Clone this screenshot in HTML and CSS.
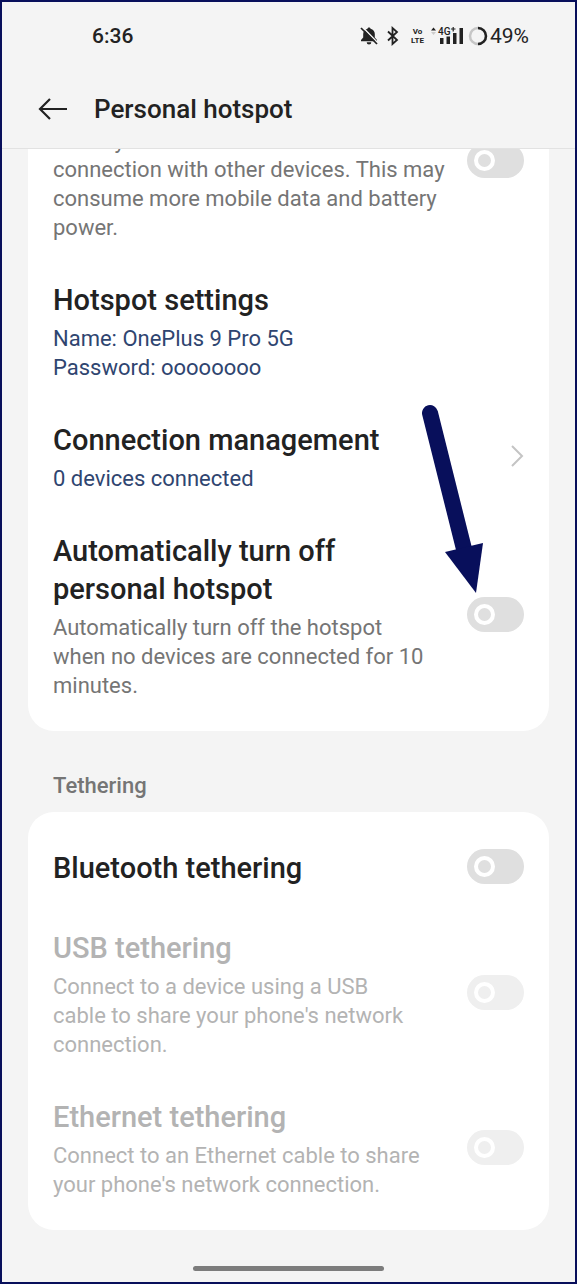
FILE: index.html
```
<!DOCTYPE html>
<html lang="en">
<head>
    <meta charset="UTF-8">
    <meta name="viewport" content="width=device-width, initial-scale=1.0">
    <title>Personal hotspot</title>
    <link rel="stylesheet" href="styles.css">
</head>
<body>
    <div class="screen">
        <header class="top">
            <div class="status-bar">
                <span class="time">6:36</span>
                <div class="status-icons">
                    <!-- Muted bell -->
                    <svg width="20" height="20" viewBox="0 0 20 20">
                        <path d="M10 1.500c-1 0-1.500.6-1.500 1.300C5.700 3.500 4.200 5.500 4.200 8v3.500L2 14v1.200h16V14l-2.200-2.500V8c0-2.500-1.500-4.500-4.300-5.200 0-.7-.5-1.300-1.500-1.300zM7.700 16.200a2.300 2.300 0 0 0 4.600 0z" fill="#222"/>
                        <path d="M3.500 1l15.500 16" stroke="#f4f4f4" stroke-width="1.500"/>
                        <path d="M2 2l16 16" stroke="#222" stroke-width="1.700"/>
                    </svg>
                    <!-- Bluetooth -->
                    <svg class="bluetooth" width="14" height="20" viewBox="0 0 14 20">
                        <path d="M2 5.500l9 8.500-4.500 4V2L11 6l-9 8.500" fill="none" stroke="#222" stroke-width="1.800"/>
                    </svg>
                    <span class="volte">Vo<br>LTE</span>
                    <!-- Mobile signal -->
                    <svg class="signal" width="32" height="20" viewBox="0 0 32 20">
                        <path d="M0 4.500L2.500 1.500 5 4.500z" fill="#222"/>
                        <path d="M0 6h5L2.500 9z" fill="#ccc"/>
                        <path d="M9 12h3.500v6H9zM15.500 10.500H19V18h-3.500zM22 7h3.500v11H22zM28.500 2H32v16h-3.500z" fill="#222"/>
                        <text class="signal-text" x="7" y="9">4G</text>
                        <path d="M20 3h4.500M22.200 1v4.500" stroke="#222" stroke-width="1.200"/>
                    </svg>
                    <!-- Battery ring -->
                    <svg width="20" height="20" viewBox="0 0 20 20">
                        <circle cx="10" cy="10" r="8" fill="none" stroke="#c6c6c6" stroke-width="2.500"/>
                        <path d="M10 2a8 8 0 0 1 0 16" fill="none" stroke="#222" stroke-width="2.500"/>
                    </svg>
                    <span class="battery">49%</span>
                </div>
            </div>
            <div class="app-bar">
                <button class="back" type="button" aria-label="Back">
                    <svg width="30" height="24" viewBox="0 0 30 24">
                        <path d="M29 12H2M12 2L2 12l10 10" fill="none" stroke="#222" stroke-width="2.200"/>
                    </svg>
                </button>
                <h1>Personal hotspot</h1>
            </div>
        </header>

        <main>
            <section class="card">
                <div class="row scrolled">
                    <label class="desc" for="hotspot">Share your mobile network<br>connection with other devices. This may<br>consume more mobile data and battery<br>power.</label>
                    <input class="toggle" type="checkbox" id="hotspot">
                </div>

                <a class="row" href="#">
                    <div class="row-text">
                        <h2 class="title">Hotspot settings</h2>
                        <p class="desc value">Name: OnePlus 9 Pro 5G<br>Password: oooooooo</p>
                    </div>
                </a>

                <a class="row" href="#">
                    <div class="row-text">
                        <h2 class="title">Connection management</h2>
                        <p class="desc value">0 devices connected</p>
                    </div>
                    <svg class="chevron" width="14" height="24" viewBox="0 0 14 24">
                        <path d="M2 2l10 10L2 22" fill="none" stroke="#c4c4c4" stroke-width="2"/>
                    </svg>
                </a>

                <div class="row">
                    <div class="row-text">
                        <label class="title" for="autoOff">Automatically turn off<br>personal hotspot</label>
                        <p class="desc">Automatically turn off the hotspot<br>when no devices are connected for 10<br>minutes.</p>
                    </div>
                    <input class="toggle" type="checkbox" id="autoOff">
                    <!-- Arrow pointing at the toggle -->
                    <svg class="pointer" width="64" height="192" viewBox="0 0 64 192">
                        <path d="M10 10L45 150" stroke="#080f5b" stroke-width="16" stroke-linecap="round"/>
                        <path d="M25 149l38-9-7 50z" fill="#080f5b"/>
                    </svg>
                </div>
            </section>

            <h3 class="group-title">Tethering</h3>

            <section class="card">
                <div class="row single">
                    <label class="title" for="bluetooth">Bluetooth tethering</label>
                    <input class="toggle" type="checkbox" id="bluetooth">
                </div>

                <div class="row disabled">
                    <div class="row-text">
                        <label class="title" for="usb">USB tethering</label>
                        <p class="desc">Connect to a device using a USB<br>cable to share your phone's network<br>connection.</p>
                    </div>
                    <input class="toggle" type="checkbox" id="usb" disabled>
                </div>

                <div class="row disabled">
                    <div class="row-text">
                        <label class="title" for="ethernet">Ethernet tethering</label>
                        <p class="desc">Connect to an Ethernet cable to share<br>your phone's network connection.</p>
                    </div>
                    <input class="toggle" type="checkbox" id="ethernet" disabled>
                </div>
            </section>
        </main>

        <div class="home-bar"></div>
    </div>
</body>
</html>
```
FILE: styles.css
```
*, *::before {
    box-sizing: border-box;
}
body {
    margin: 0;
    font-family: Roboto, "Liberation Sans", sans-serif;
    color: #222;
    background-color: #f4f4f4;
}
h1, h2, h3, p {
    margin: 0;
}
svg {
    display: block;
    flex: none;
}
.screen {
    display: flex;
    flex-direction: column;
    min-height: 100vh;
    border: 2px solid #080f5b;
}

/* Header */
.top {
    position: sticky;
    top: 0;
    z-index: 1;
    background-color: #f4f4f4;
    border-bottom: 1px solid #e2e2e2;
}
.status-bar {
    display: flex;
    align-items: center;
    justify-content: space-between;
    height: 68px;
    padding: 0 46px 0 90px;
}
.time {
    font-size: 21px;
    font-weight: 500;
}
.status-icons {
    display: flex;
    align-items: center;
}
.bluetooth {
    margin-left: 7px;
}
.volte {
    margin-left: 11px;
    font-size: 8px;
    font-weight: 700;
    line-height: 9px;
    text-align: center;
}
.signal {
    margin: 0 5px 0 7px;
}
.signal-text {
    font-size: 10px;
    font-weight: 500;
    fill: #222;
}
.battery {
    margin-left: 2px;
    font-size: 21px;
}
.app-bar {
    display: flex;
    align-items: center;
    gap: 26px;
    height: 78px;
    padding: 0 36px;
}
.back {
    padding: 0;
    border: none;
    background: none;
    cursor: pointer;
}
.app-bar h1 {
    font-size: 26px;
    font-weight: 500;
}

/* Cards, the first one is scrolled under the header */
main {
    flex: 1;
    margin-top: -60px;
    padding: 0 26px;
}
.card {
    padding: 17px 25px 12px;
    background-color: #fff;
    border-radius: 26px;
}
.row {
    position: relative;
    display: flex;
    align-items: center;
    justify-content: space-between;
    padding: 20px 0 19px;
    color: inherit;
    text-decoration: none;
}
.scrolled {
    align-items: flex-start;
}
.scrolled .toggle {
    margin-top: 17px;
}
.single {
    padding-bottom: 22px;
}
.title {
    display: block;
    font-size: 29px;
    font-weight: 500;
    line-height: 38px;
}
.desc {
    font-size: 22px;
    line-height: 29px;
    color: #757575;
}
.title + .desc {
    margin-top: 5px;
}
.value {
    color: #2f4570;
}
.group-title {
    padding: 40px 25px 12px;
    font-size: 22px;
    font-weight: 500;
    line-height: 29px;
    color: #757575;
}
.disabled .title,
.disabled .desc {
    color: #b3b3b3;
}
.chevron {
    margin-bottom: 3px;
}
.pointer {
    position: absolute;
    top: -109px;
    right: 40px;
}

/* Toggle */
.toggle {
    appearance: none;
    display: flex;
    align-items: center;
    flex: none;
    width: 57px;
    height: 35px;
    margin: 0 0 3px;
    padding: 0 7px;
    background-color: #dfdfdf;
    border-radius: 18px;
}
.toggle::before {
    content: "";
    width: 21px;
    height: 21px;
    border: 4px solid #fff;
    border-radius: 50%;
}
.toggle:checked {
    justify-content: flex-end;
    background-color: #2f4570;
}
.toggle:disabled {
    background-color: #efefef;
}

.home-bar {
    width: 191px;
    height: 5px;
    margin: 36px auto 11px;
    background-color: #7c7c7c;
    border-radius: 3px;
}
```
